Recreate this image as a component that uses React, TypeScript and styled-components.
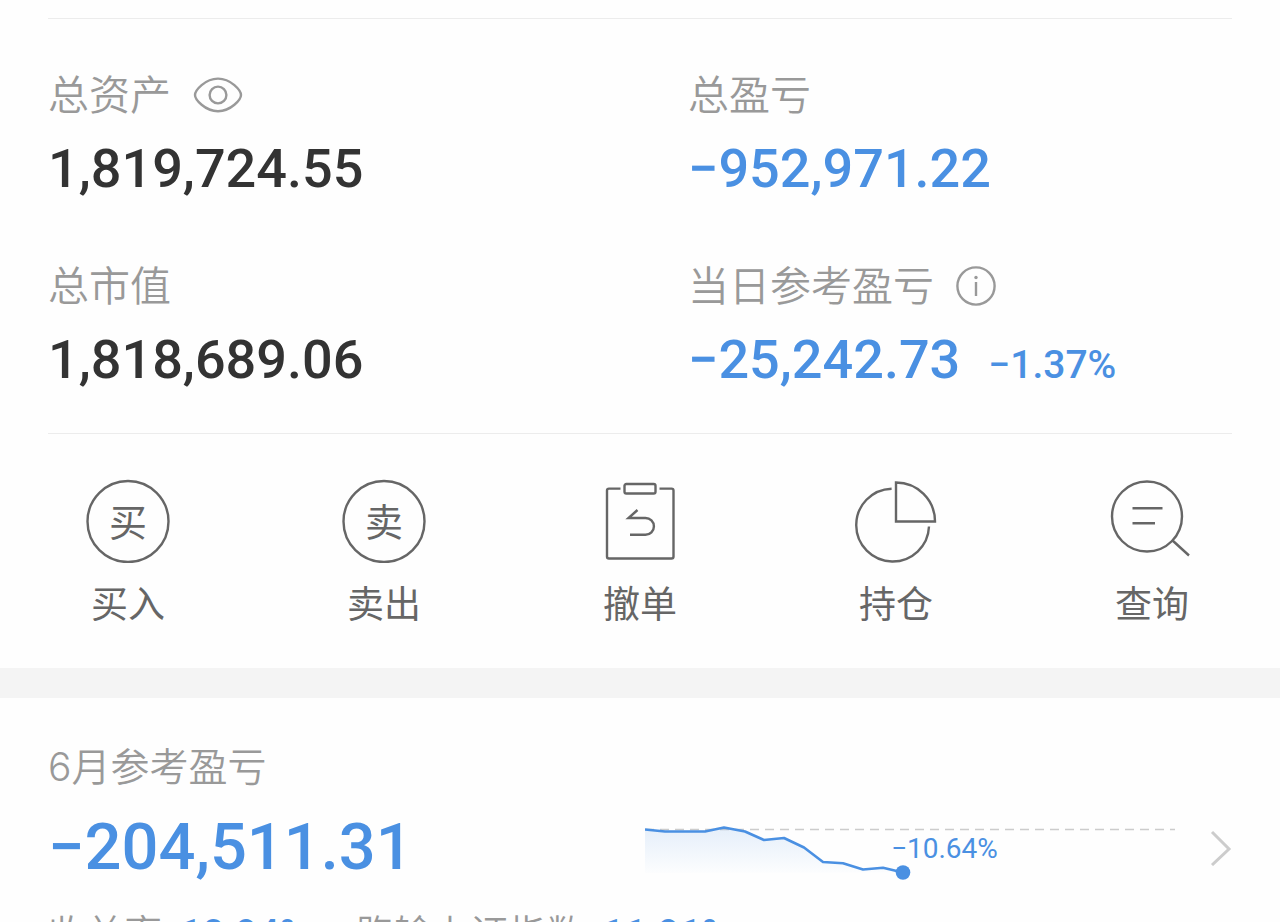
import React from "react";
import styled, { createGlobalStyle } from "styled-components";

const GlobalStyle = createGlobalStyle`
  html {
    scrollbar-width: none;
  }
  body {
    margin: 0;
    background: #fefefe;
    font-family: Inter, "Noto Sans CJK SC", sans-serif;
  }
  button {
    padding: 0;
    border: 0;
    background: none;
    font: inherit;
    color: inherit;
    cursor: pointer;
  }
  svg {
    display: block;
  }
`;

const Page = styled.main`
  padding-top: 18px;
`;

const Summary = styled.section`
  display: grid;
  grid-template-columns: 1fr 1fr;
  row-gap: 63px;
  margin: 0 48px;
  padding: 52px 0 43px;
  border-top: 1px solid #ececec;
  border-bottom: 1px solid #ececec;
`;

const Metric = styled.div`
  display: flex;
  flex-direction: column;
  gap: 20px;

  &:nth-child(even) {
    padding-left: 48px;
  }
`;

const Label = styled.div<{ $small?: boolean }>`
  display: flex;
  align-items: center;
  gap: 22px;
  font-size: ${(p) => (p.$small ? 39 : 41)}px;
  line-height: 48px;
  font-weight: 350;
  color: #999;
`;

const Amount = styled.div<{ $tone?: "down"; $large?: boolean }>`
  display: flex;
  align-items: baseline;
  gap: 28px;
  font-family: Roboto, sans-serif;
  font-weight: 500;
  font-size: ${(p) => (p.$large ? 65 : 54)}px;
  line-height: ${(p) => (p.$large ? 80 : 60)}px;
  color: ${(p) => (p.$tone === "down" ? "#4a90e2" : "#333")};
`;

const Percent = styled.span`
  font-size: 39px;
  line-height: 40px;
`;

const Actions = styled.nav`
  display: grid;
  grid-template-columns: repeat(5, 1fr);
  padding: 45px 0 39px;
`;

const Action = styled.button`
  display: flex;
  flex-direction: column;
  align-items: center;
  gap: 18px;
`;

const ActionLabel = styled.span`
  font-size: 37px;
  line-height: 48px;
  color: #666;
`;

const Divider = styled.div`
  height: 30px;
  background: #f4f4f4;
`;

const Monthly = styled.section`
  display: flex;
  flex-direction: column;
  padding: 45px 48px 40px;
`;

const MonthlyRow = styled.div`
  display: grid;
  grid-template-columns: minmax(0, 1fr) 530px 57px;
  align-items: center;
  margin: 16px 0 22px;
`;

const DetailLink = styled.a`
  justify-self: end;
`;

const Stats = styled.div`
  display: flex;
  gap: 48px;
  white-space: nowrap;
`;

const Stat = styled.div`
  display: flex;
  align-items: baseline;
  gap: 18px;
  font-size: 38px;
  line-height: 48px;
  font-weight: 350;
  color: #999;
`;

const StatValue = styled.span`
  font-family: Roboto, sans-serif;
  font-size: 39px;
  font-weight: 500;
  color: #4a90e2;
`;

const IconText = styled.text`
  font-size: 38px;
  font-family: "Noto Sans CJK SC", sans-serif;
  fill: #666;
  text-anchor: middle;
`;

const ChartText = styled.text`
  font-family: Roboto, sans-serif;
  font-size: 28px;
  fill: #4a90e2;
`;

const EyeIcon = () => (
  <svg width="50" height="38" viewBox="0 0 50 38" fill="none" stroke="#999" strokeWidth="2.4">
    <path d="M2 19C2 14.500 12 2.600 25 2.600S48 14.500 48 19 38 35.200 25 35.200 2 23.500 2 19z" />
    <circle cx="25" cy="19" r="8.4" />
  </svg>
);

const InfoIcon = () => (
  <svg width="40" height="40" viewBox="0 0 40 40" fill="none" stroke="#999" strokeWidth="2.4">
    <circle cx="20" cy="20" r="18.6" />
    <path d="M20 16v14" />
    <circle cx="20" cy="11.500" r="1.700" fill="#999" stroke="none" />
  </svg>
);

const ActionIcon = ({ children }: { children: React.ReactNode }) => (
  <svg width="84" height="84" viewBox="0 0 84 84" fill="none" stroke="#666" strokeWidth="2.4">
    {children}
  </svg>
);

const CharIcon = ({ char }: { char: string }) => (
  <ActionIcon>
    <circle cx="42" cy="42.500" r="40.500" />
    <IconText x="42" y="57" stroke="none">
      {char}
    </IconText>
  </ActionIcon>
);

const CancelIcon = () => (
  <ActionIcon>
    <path d="M22.500 9.600H11a2 2 0 0 0-2 2V77.500a2 2 0 0 0 2 2H73.500a2 2 0 0 0 2-2V11.600a2 2 0 0 0-2-2H61.500" />
    <rect x="26.500" y="5" width="31" height="9.500" rx="1.800" />
    <path d="M39.500 31L30.500 39H47.500a8.400 8.400 0 0 1 0 16.800H32" />
  </ActionIcon>
);

const HoldingIcon = () => (
  <ActionIcon>
    <path d="M37.600 9.700A36.400 36.400 0 1 0 75 47.500" />
    <path d="M42 3.500V42.500H81A39 39 0 0 0 42 3.500z" />
  </ActionIcon>
);

const QueryIcon = () => (
  <ActionIcon>
    <circle cx="37" cy="37.500" r="35" />
    <path d="M62 61L79 76.500M22.500 29.300H52.500M22.500 44.200H45" />
  </ActionIcon>
);

const ChevronIcon = () => (
  <svg width="22" height="38" viewBox="0 0 22 38" fill="none" stroke="#ccc" strokeWidth="3">
    <path d="M2 4L19 21L2 37" />
  </svg>
);

const trend = [
  [0, 22.5], [20, 24.5], [60, 24.5], [79, 20.5], [100, 24.5], [119, 33], [139, 31],
  [159, 40.5], [178, 55], [198, 56.3], [218, 62.5], [238, 60.7], [258, 65.5],
];
const trendLine = trend.map(([x, y]) => `${x},${y}`).join(" ");

const TrendChart = () => (
  <svg width="530" height="80" viewBox="0 0 530 80" fill="none" role="img" aria-label="收益走势">
    <defs>
      <linearGradient id="trendFill" x1="0" y1="20" x2="0" y2="66" gradientUnits="userSpaceOnUse">
        <stop offset="0" stopColor="#4a90e2" stopOpacity="0.14" />
        <stop offset="1" stopColor="#4a90e2" stopOpacity="0.01" />
      </linearGradient>
    </defs>
    <path d="M0 22.500H530" stroke="#ccc" strokeWidth="1.600" strokeDasharray="9 6" />
    <polygon points={`${trendLine} 0,66`} fill="url(#trendFill)" />
    <polyline points={trendLine} stroke="#4a90e2" strokeWidth="2.600" strokeLinejoin="round" />
    <circle cx="258" cy="65.500" r="7.300" fill="#4a90e2" />
    <ChartText x="246" y="51">−10.64%</ChartText>
  </svg>
);

const actions = [
  { label: "买入", icon: <CharIcon char="买" /> },
  { label: "卖出", icon: <CharIcon char="卖" /> },
  { label: "撤单", icon: <CancelIcon /> },
  { label: "持仓", icon: <HoldingIcon /> },
  { label: "查询", icon: <QueryIcon /> },
];

export default function App() {
  return (
    <>
      <GlobalStyle />
      <Page>
        <Summary>
          <Metric>
            <Label>
              总资产
              <button type="button" aria-label="隐藏金额">
                <EyeIcon />
              </button>
            </Label>
            <Amount>1,819,724.55</Amount>
          </Metric>
          <Metric>
            <Label>总盈亏</Label>
            <Amount $tone="down">−952,971.22</Amount>
          </Metric>
          <Metric>
            <Label>总市值</Label>
            <Amount>1,818,689.06</Amount>
          </Metric>
          <Metric>
            <Label>
              当日参考盈亏
              <button type="button" aria-label="说明">
                <InfoIcon />
              </button>
            </Label>
            <Amount $tone="down">
              −25,242.73
              <Percent>−1.37%</Percent>
            </Amount>
          </Metric>
        </Summary>

        <Actions>
          {actions.map((action) => (
            <Action type="button" key={action.label}>
              {action.icon}
              <ActionLabel>{action.label}</ActionLabel>
            </Action>
          ))}
        </Actions>

        <Divider />

        <Monthly>
          <Label $small>6月参考盈亏</Label>
          <MonthlyRow>
            <Amount $tone="down" $large>
              −204,511.31
            </Amount>
            <TrendChart />
            <DetailLink href="#monthly" aria-label="查看详情">
              <ChevronIcon />
            </DetailLink>
          </MonthlyRow>
          <Stats>
            <Stat>
              收益率
              <StatValue>10.94%</StatValue>
            </Stat>
            <Stat>
              跑输上证指数
              <StatValue>11.91%</StatValue>
            </Stat>
          </Stats>
        </Monthly>
      </Page>
    </>
  );
}
